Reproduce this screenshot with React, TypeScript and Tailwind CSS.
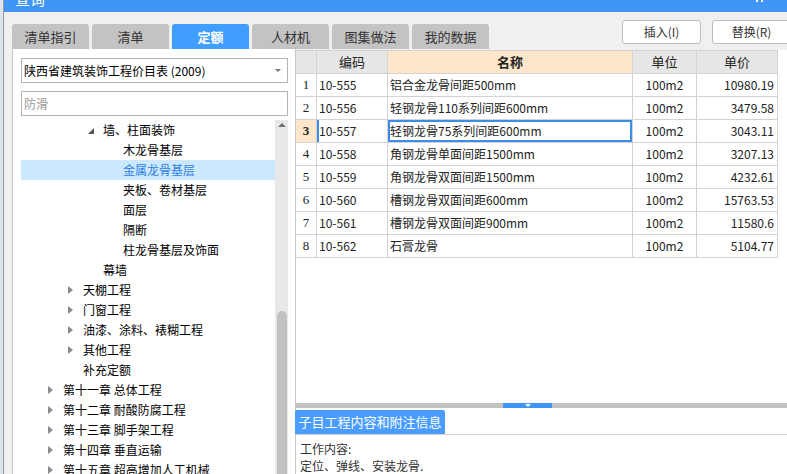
import React from "react"

const FONT = { fontFamily: '"Noto Sans CJK SC", "Liberation Sans", sans-serif' }

const TABS = ["清单指引", "清单", "定额", "人材机", "图集做法", "我的数据"]

type TreeRow = { level: number; text: string; arrow?: "open" | "closed"; selected?: boolean }

const TREE: TreeRow[] = [
  { level: 3, text: "墙、柱面装饰", arrow: "open" },
  { level: 4, text: "木龙骨基层" },
  { level: 4, text: "金属龙骨基层", selected: true },
  { level: 4, text: "夹板、卷材基层" },
  { level: 4, text: "面层" },
  { level: 4, text: "隔断" },
  { level: 4, text: "柱龙骨基层及饰面" },
  { level: 3, text: "幕墙" },
  { level: 2, text: "天棚工程", arrow: "closed" },
  { level: 2, text: "门窗工程", arrow: "closed" },
  { level: 2, text: "油漆、涂料、裱糊工程", arrow: "closed" },
  { level: 2, text: "其他工程", arrow: "closed" },
  { level: 2, text: "补充定额" },
  { level: 1, text: "第十一章 总体工程", arrow: "closed" },
  { level: 1, text: "第十二章 耐酸防腐工程", arrow: "closed" },
  { level: 1, text: "第十三章 脚手架工程", arrow: "closed" },
  { level: 1, text: "第十四章 垂直运输", arrow: "closed" },
  { level: 1, text: "第十五章 超高增加人工机械", arrow: "closed" },
]

const ROWS = [
  ["10-555", "铝合金龙骨间距500mm", "100m2", "10980.19"],
  ["10-556", "轻钢龙骨110系列间距600mm", "100m2", "3479.58"],
  ["10-557", "轻钢龙骨75系列间距600mm", "100m2", "3043.11"],
  ["10-558", "角钢龙骨单面间距1500mm", "100m2", "3207.13"],
  ["10-559", "角钢龙骨双面间距1500mm", "100m2", "4232.61"],
  ["10-560", "槽钢龙骨双面间距600mm", "100m2", "15763.53"],
  ["10-561", "槽钢龙骨双面间距900mm", "100m2", "11580.6"],
  ["10-562", "石膏龙骨", "100m2", "5104.77"],
]

function Tree() {
  return (
    <div className="flex flex-1 min-h-0 mt-[4px] mr-[7px]">
      <div className="flex-1 flex flex-col">
        {TREE.map((r, i) => (
          <div
            key={i}
            className={`h-[20px] flex items-center shrink-0 text-[12px] ${r.selected ? "bg-[#cce8ff] text-[#2f7fe0]" : "text-black"}`}
          >
            {/* spacer so text lands at its level */}
            <div style={{ width: 27 + (r.level - 1) * 20 }} className="shrink-0" />
            <div className="w-[15px] shrink-0 flex items-center">
              {r.arrow === "closed" && (
                <div className="w-0 h-0 border-y-[4px] border-y-transparent border-l-[5px] border-l-[#8a8a8a]" />
              )}
              {r.arrow === "open" && (
                <div className="w-0 h-0 border-b-[6px] border-b-[#555] border-l-[6px] border-l-transparent mt-[1px]" />
              )}
            </div>
            <span className="whitespace-nowrap">{r.text}</span>
          </div>
        ))}
      </div>
      {/* scrollbar */}
      <div className="w-[13px] bg-[#e8e8e8] flex flex-col items-center">
        <div className="mt-[3px] w-0 h-0 border-x-[4px] border-x-transparent border-b-[4px] border-b-[#707070]" />
        <div className="mt-[184px] w-[10px] flex-1 bg-[#c2c2c2] rounded-t-[5px]" />
      </div>
    </div>
  )
}

function Table() {
  const cols = "grid grid-cols-[21px_71px_245px_64px_81px]"
  return (
    <div className="w-[482px] border-t border-[#d2d2d2] text-[12px] text-[#222]">
      <div className={`${cols} h-[23px]`}>
        <div className="bg-[#e6e6e6] border-r border-b border-[#d2d2d2]" />
        <div className="bg-[#e6e6e6] border-r border-b border-[#d2d2d2] flex items-center justify-center text-[13px]">编码</div>
        <div className="bg-[#fde6c9] border-r border-b border-[#d2d2d2] flex items-center justify-center text-[13px] font-bold">名称</div>
        <div className="bg-[#e6e6e6] border-r border-b border-[#d2d2d2] flex items-center justify-center text-[13px]">单位</div>
        <div className="bg-[#e6e6e6] border-r border-b border-[#d2d2d2] flex items-center justify-center text-[13px]">单价</div>
      </div>
      {ROWS.map((r, i) => {
        const sel = i === 2
        return (
          <div key={i} className={`${cols} h-[23px]`}>
            <div
              className={`border-r border-b border-[#d2d2d2] flex items-center justify-center text-[13px] ${sel ? "bg-[#fde6c9] font-bold" : ""}`}
              style={{ fontFamily: '"Liberation Serif", serif' }}
            >
              {i + 1}
            </div>
            <div className={`border-r border-b border-[#d2d2d2] flex items-center pl-[2px] ${sel ? "shadow-[inset_2px_0_0_#3b8ee8]" : ""}`}>{r[0]}</div>
            <div className={`border-r border-b border-[#d2d2d2] flex items-center pl-[2px] whitespace-nowrap ${sel ? "shadow-[inset_0_0_0_2px_#3b8ee8]" : ""}`}>{r[1]}</div>
            <div className="border-r border-b border-[#d2d2d2] flex items-center justify-center">{r[2]}</div>
            <div className="border-r border-b border-[#d2d2d2] flex items-center justify-end pr-[3px]">{r[3]}</div>
          </div>
        )
      })}
    </div>
  )
}

export default function App() {
  return (
    <div className="w-[787px] h-[474px] overflow-hidden flex bg-[#f0f0f0]" style={FONT}>
      {/* window behind the dialog */}
      <div className="w-[3px] bg-[#dfe4ec] shrink-0" />
      <div className="flex-1 flex flex-col border-l border-[#9a9a9a] min-w-0">
        {/* title bar, mostly scrolled off */}
        <div className="h-[12px] bg-[#4096f6] overflow-hidden shrink-0 pl-[11px] flex justify-between">
          <span className="text-white text-[15px] leading-[15px] -mt-[9px]">查询</span>
          <div className="flex gap-[3px] mr-[24px]">
            <div className="w-[2px] h-[2px] bg-white" />
            <div className="w-[2px] h-[2px] bg-white" />
          </div>
        </div>
        {/* tabs + actions */}
        <div className="h-[37px] shrink-0 flex justify-between pl-[8px]">
          <div className="flex items-end gap-[3px]">
            {TABS.map((t) => (
              <div
                key={t}
                className={`w-[77px] h-[25px] rounded-t-[3px] flex items-center justify-center text-[13px] ${t === "定额" ? "bg-[#409eff] text-white font-bold" : "bg-[#c3c3c3] text-[#333]"}`}
              >
                {t}
              </div>
            ))}
          </div>
          <div className="flex gap-[11px] mt-[8px] -mr-[4px]">
            <button className="w-[79px] h-[24px] bg-white border border-[#bdbdbd] rounded-[3px] text-[12px] text-[#333]">插入(I)</button>
            <button className="w-[79px] h-[24px] bg-white border border-[#bdbdbd] rounded-[3px] text-[12px] text-[#333]">替换(R)</button>
          </div>
        </div>
        {/* body */}
        <div className="flex-1 flex min-h-0 pl-[8px]">
          <div className="w-[284px] bg-white border-x border-[#c8c8c8] flex flex-col pl-[8px]">
            <div className="mt-[9px] mr-[7px] h-[25px] border border-[#b4b4b4] flex items-center justify-between pl-[2px] pr-[6px] text-[12px] text-black">
              <span className="whitespace-nowrap">陕西省建筑装饰工程价目表 (2009)</span>
              <div className="w-0 h-0 border-x-[3px] border-x-transparent border-t-[3px] border-t-[#777]" />
            </div>
            <div className="mt-[8px] mr-[7px] h-[25px] border border-[#b4b4b4] flex items-center pl-[2px] text-[12px] text-[#999]">防滑</div>
            <Tree />
          </div>
          <div className="flex-1 bg-white flex flex-col min-w-0">
            <div className="h-[1px] bg-[#f0f0f0]" />
            <Table />
            <div className="flex-1" />
            <div className="h-[5px] bg-[#c2c2c2] flex justify-center -ml-[1px]">
              <div className="w-[49px] h-[5px] bg-[#4096f6] flex justify-center pt-[1px] -ml-[27px]">
                <div className="w-0 h-0 border-x-[3px] border-x-transparent border-t-[3px] border-t-white" />
              </div>
            </div>
            <div className="mt-[2px] border-b border-[#d0d0d0] -ml-[1px]">
              <div className="w-[150px] h-[24px] bg-[#4a9dff] rounded-t-[2px] flex items-center justify-center text-[13px] text-white">子目工程内容和附注信息</div>
            </div>
            <div className="pl-[4px] pt-[5px] text-[12px] leading-[17px] text-[#333]">
              <div>工作内容:</div>
              <div>定位、弹线、安装龙骨.</div>
            </div>
          </div>
        </div>
      </div>
    </div>
  )
}
